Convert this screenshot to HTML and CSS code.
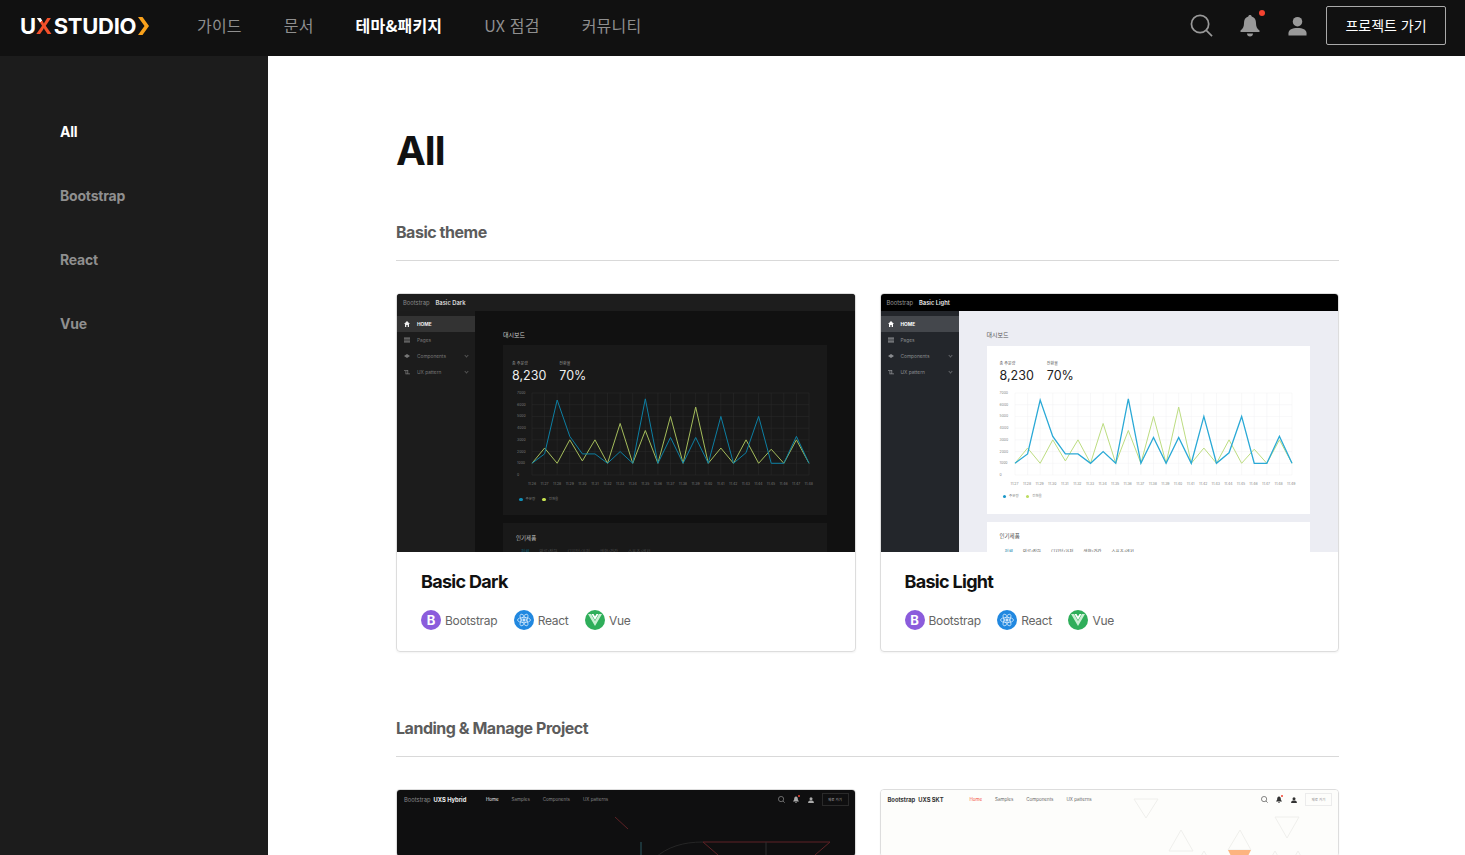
FILE: index.html
```html
<!DOCTYPE html>
<html lang="ko">
<head>
  <meta charset="UTF-8">
  <meta name="viewport" content="width=device-width, initial-scale=1.0">
  <title>UX STUDIO - All</title>
  <link rel="stylesheet" href="styles.css">
</head>
<body>
  <header class="topbar">
    <a class="logo" href="#">
      <span>U<span class="logo-x">X</span></span><span class="logo-studio">STUDIO</span>
      <svg class="logo-arrow" width="11" height="18" viewBox="0 0 11 18"><path d="M0 0h4.500L11 9l-6.500 9H0l6.500-9z"/></svg>
    </a>
    <nav class="topnav">
      <a href="#">가이드</a>
      <a href="#">문서</a>
      <a href="#" class="active">테마&amp;패키지</a>
      <a href="#">UX 점검</a>
      <a href="#">커뮤니티</a>
    </nav>
    <div class="top-actions">
      <svg class="top-icon" width="23" height="23" viewBox="0 0 24 24"><circle cx="10.500" cy="10.500" r="9" fill="none" stroke="#999" stroke-width="1.800"/><path d="M17 17l6 6" stroke="#999" stroke-width="1.800" fill="none"/></svg>
      <span class="bell">
        <svg width="20" height="23" viewBox="0 0 20 23"><path fill="#999" d="M10 1c1 0 1.700.7 1.700 1.600 3 .8 4.300 3.300 4.300 6.400 0 3.500.8 5.300 3.500 7.500v1.500H.5v-1.500C3.200 14.300 4 12.500 4 9c0-3.100 1.300-5.600 4.300-6.400C8.300 1.700 9 1 10 1zM7 19.500h6c0 1.700-1.300 3-3 3s-3-1.300-3-3z"/></svg>
        <i class="bell-dot"></i>
      </span>
      <svg class="top-icon" width="19" height="20" viewBox="0 0 20 20"><circle cx="10" cy="5.500" r="5" fill="#999"/><path fill="#999" d="M.5 20v-2.500c0-3.700 4-5.500 9.500-5.500s9.500 1.800 9.500 5.500V20z"/></svg>
      <a href="#" class="project-btn">프로젝트 가기</a>
    </div>
  </header>

  <div class="page">
    <aside class="sidebar">
      <a href="#" class="active">All</a>
      <a href="#">Bootstrap</a>
      <a href="#">React</a>
      <a href="#">Vue</a>
    </aside>

    <main class="content">
      <h1>All</h1>

      <h2 class="section-title">Basic theme</h2>
      <div class="card-grid">
        <article class="card">
          <div class="thumb thumb-dark">
            <div class="t-head"><span>Bootstrap</span><b>Basic Dark</b></div>
            <div class="t-body">
              <div class="t-side">
                <div class="t-row on"><svg width="6" height="6" viewBox="0 0 6 6"><path d="M3 0l3 3H5v3H3.700V4H2.300v2H1V3H0z"/></svg>HOME</div>
                <div class="t-row"><svg width="6" height="6" viewBox="0 0 6 6"><path d="M0 .5h6v1.200H0zM0 2.400h6v1.200H0zM0 4.300h6v1.200H0z"/></svg>Pages</div>
                <div class="t-row"><svg width="6" height="6" viewBox="0 0 6 6"><path d="M3 1l3 2-3 2-3-2z"/></svg>Components<i class="t-caret"></i></div>
                <div class="t-row"><svg width="6" height="6" viewBox="0 0 6 6"><path d="M0 1h4v.8H0zM3.400 1h.8v4h-.8zM1.500 4.400H6v.8H1.500zM1.500 2h.8v3h-.8z"/></svg>UX pattern<i class="t-caret"></i></div>
              </div>
              <div class="t-main">
                <div class="t-title">대시보드</div>
                <div class="t-panel">
                  <div class="t-stats">
                    <div><small>총 주문량</small><strong>8,230</strong></div>
                    <div><small>전환율</small><strong>70%</strong></div>
                  </div>
                  <div class="t-chart">
                    <div class="t-yaxis"><span>7000</span><span>6000</span><span>5000</span><span>4000</span><span>3000</span><span>2000</span><span>1000</span><span>0</span></div>
                    <svg class="t-plot" viewBox="0 0 22 7000" preserveAspectRatio="none">
                      <path class="grid" d="M0 0H22M0 1000H22M0 2000H22M0 3000H22M0 4000H22M0 5000H22M0 6000H22M0 7000H22M0 0V7000M1 0V7000M2 0V7000M3 0V7000M4 0V7000M5 0V7000M6 0V7000M7 0V7000M8 0V7000M9 0V7000M10 0V7000M11 0V7000M12 0V7000M13 0V7000M14 0V7000M15 0V7000M16 0V7000M17 0V7000M18 0V7000M19 0V7000M20 0V7000M21 0V7000M22 0V7000"/>
                      <polyline class="line-b" points="0,6000 1,4700 2,6000 3,4000 4,5800 5,4000 6,6000 7,2600 8,6000 9,3200 10,6000 11,2000 12,6000 13,1200 14,6000 15,4700 16,6000 17,4000 18,6000 19,4800 20,6000 21,4000 22,6000"/>
                      <polyline class="line-a" points="0,6000 1,5200 2,600 3,3700 4,5200 5,5200 6,6000 7,5000 8,6000 9,500 10,6000 11,3800 12,6000 13,3800 14,6000 15,2000 16,6000 17,5100 18,2000 19,6000 20,6000 21,3700 22,6000"/>
                    </svg>
                  </div>
                  <div class="t-xaxis"><span>11:26</span><span>11:27</span><span>11:28</span><span>11:29</span><span>11:30</span><span>11:31</span><span>11:32</span><span>11:33</span><span>11:34</span><span>11:35</span><span>11:36</span><span>11:37</span><span>11:38</span><span>11:39</span><span>11:40</span><span>11:41</span><span>11:42</span><span>11:43</span><span>11:44</span><span>11:45</span><span>11:46</span><span>11:47</span><span>11:48</span></div>
                  <div class="t-legend"><span><i class="dot-a"></i>주문량</span><span><i class="dot-b"></i>전환율</span></div>
                </div>
                <div class="t-panel t-panel-next">
                  <div class="t-sub">인기제품</div>
                  <div class="t-tabs"><span class="on">전체</span><span>의류/잡화</span><span>디지털/가전</span><span>생활/건강</span><span>스포츠/레저</span></div>
                </div>
              </div>
            </div>
          </div>
          <div class="card-body">
            <h3>Basic Dark</h3>
            <div class="badges">
              <span class="badge"><i class="badge-icon bs">B</i>Bootstrap</span>
              <span class="badge"><i class="badge-icon re"><svg width="16" height="16" viewBox="0 0 16 16" fill="none" stroke="#cfe6fb" stroke-width=".8"><ellipse cx="8" cy="8" rx="6.500" ry="2.600"/><ellipse cx="8" cy="8" rx="6.500" ry="2.600" transform="rotate(60 8 8)"/><ellipse cx="8" cy="8" rx="6.500" ry="2.600" transform="rotate(120 8 8)"/><circle cx="8" cy="8" r="1.200" fill="#cfe6fb"/></svg></i>React</span>
              <span class="badge"><i class="badge-icon vu"><svg width="14" height="12" viewBox="0 0 14 12"><path fill="#c9efd3" d="M0 0h3l4 7 4-7h3L7 12z"/><path fill="#fff" d="M3.500 0h2L7 2.600 8.500 0h2L7 6z"/></svg></i>Vue</span>
            </div>
          </div>
        </article>

        <article class="card">
          <div class="thumb thumb-light">
            <div class="t-head"><span>Bootstrap</span><b>Basic Light</b></div>
            <div class="t-body">
              <div class="t-side">
                <div class="t-row on"><svg width="6" height="6" viewBox="0 0 6 6"><path d="M3 0l3 3H5v3H3.700V4H2.300v2H1V3H0z"/></svg>HOME</div>
                <div class="t-row"><svg width="6" height="6" viewBox="0 0 6 6"><path d="M0 .5h6v1.200H0zM0 2.400h6v1.200H0zM0 4.300h6v1.200H0z"/></svg>Pages</div>
                <div class="t-row"><svg width="6" height="6" viewBox="0 0 6 6"><path d="M3 1l3 2-3 2-3-2z"/></svg>Components<i class="t-caret"></i></div>
                <div class="t-row"><svg width="6" height="6" viewBox="0 0 6 6"><path d="M0 1h4v.8H0zM3.400 1h.8v4h-.8zM1.500 4.400H6v.8H1.500zM1.500 2h.8v3h-.8z"/></svg>UX pattern<i class="t-caret"></i></div>
              </div>
              <div class="t-main">
                <div class="t-title">대시보드</div>
                <div class="t-panel">
                  <div class="t-stats">
                    <div><small>총 주문량</small><strong>8,230</strong></div>
                    <div><small>전환율</small><strong>70%</strong></div>
                  </div>
                  <div class="t-chart">
                    <div class="t-yaxis"><span>7000</span><span>6000</span><span>5000</span><span>4000</span><span>3000</span><span>2000</span><span>1000</span><span>0</span></div>
                    <svg class="t-plot" viewBox="0 0 22 7000" preserveAspectRatio="none">
                      <path class="grid" d="M0 0H22M0 1000H22M0 2000H22M0 3000H22M0 4000H22M0 5000H22M0 6000H22M0 7000H22M0 0V7000M1 0V7000M2 0V7000M3 0V7000M4 0V7000M5 0V7000M6 0V7000M7 0V7000M8 0V7000M9 0V7000M10 0V7000M11 0V7000M12 0V7000M13 0V7000M14 0V7000M15 0V7000M16 0V7000M17 0V7000M18 0V7000M19 0V7000M20 0V7000M21 0V7000M22 0V7000"/>
                      <polyline class="line-b" points="0,6000 1,4700 2,6000 3,4000 4,5800 5,4000 6,6000 7,2600 8,6000 9,3200 10,6000 11,2000 12,6000 13,1200 14,6000 15,4700 16,6000 17,4000 18,6000 19,4800 20,6000 21,4000 22,6000"/>
                      <polyline class="line-a" points="0,6000 1,5200 2,600 3,3700 4,5200 5,5200 6,6000 7,5000 8,6000 9,500 10,6000 11,3800 12,6000 13,3800 14,6000 15,2000 16,6000 17,5100 18,2000 19,6000 20,6000 21,3700 22,6000"/>
                    </svg>
                  </div>
                  <div class="t-xaxis"><span>11:27</span><span>11:28</span><span>11:29</span><span>11:30</span><span>11:31</span><span>11:32</span><span>11:33</span><span>11:34</span><span>11:35</span><span>11:36</span><span>11:37</span><span>11:38</span><span>11:39</span><span>11:40</span><span>11:41</span><span>11:42</span><span>11:43</span><span>11:44</span><span>11:45</span><span>11:46</span><span>11:47</span><span>11:48</span><span>11:49</span></div>
                  <div class="t-legend"><span><i class="dot-a"></i>주문량</span><span><i class="dot-b"></i>전환율</span></div>
                </div>
                <div class="t-panel t-panel-next">
                  <div class="t-sub">인기제품</div>
                  <div class="t-tabs"><span class="on">전체</span><span>의류/잡화</span><span>디지털/가전</span><span>생활/건강</span><span>스포츠/레저</span></div>
                </div>
              </div>
            </div>
          </div>
          <div class="card-body">
            <h3>Basic Light</h3>
            <div class="badges">
              <span class="badge"><i class="badge-icon bs">B</i>Bootstrap</span>
              <span class="badge"><i class="badge-icon re"><svg width="16" height="16" viewBox="0 0 16 16" fill="none" stroke="#cfe6fb" stroke-width=".8"><ellipse cx="8" cy="8" rx="6.500" ry="2.600"/><ellipse cx="8" cy="8" rx="6.500" ry="2.600" transform="rotate(60 8 8)"/><ellipse cx="8" cy="8" rx="6.500" ry="2.600" transform="rotate(120 8 8)"/><circle cx="8" cy="8" r="1.200" fill="#cfe6fb"/></svg></i>React</span>
              <span class="badge"><i class="badge-icon vu"><svg width="14" height="12" viewBox="0 0 14 12"><path fill="#c9efd3" d="M0 0h3l4 7 4-7h3L7 12z"/><path fill="#fff" d="M3.500 0h2L7 2.600 8.500 0h2L7 6z"/></svg></i>Vue</span>
            </div>
          </div>
        </article>
      </div>

      <h2 class="section-title section-next">Landing &amp; Manage Project</h2>
      <div class="card-grid">
        <article class="card">
          <div class="thumb thumb-site site-dark">
            <svg class="site-art" width="458" height="70" viewBox="0 0 458 70" fill="none">
              <path d="M218 27l13 12M306 52h127M306 52l15 13M433 52l-15 13" stroke="#5e2226"/>
              <path d="M369 52v16" stroke="#2e2e2e"/>
              <path d="M244 52v14" stroke="#2b5a63"/>
              <path d="M258 68c12-11 28-16 48-16" stroke="#262626"/>
            </svg>
            <div class="site-head">
              <span class="site-brand"><span>Bootstrap</span><b>UXS Hybrid</b></span>
              <span class="site-nav"><a class="on">Home</a><a>Samples</a><a>Components</a><a>UX patterns</a></span>
              <span class="site-tools">
                <svg width="7" height="7" viewBox="0 0 24 24"><circle cx="10.500" cy="10.500" r="9" fill="none" stroke="currentColor" stroke-width="2"/><path d="M17 17l6 6" stroke="currentColor" stroke-width="2"/></svg>
                <span class="mini-bell"><svg width="6" height="7" viewBox="0 0 20 23"><path fill="currentColor" d="M10 1c1 0 1.700.7 1.700 1.600 3 .8 4.300 3.300 4.300 6.400 0 3.500.8 5.300 3.500 7.500v1.500H.5v-1.500C3.200 14.300 4 12.500 4 9c0-3.100 1.300-5.600 4.300-6.400C8.300 1.700 9 1 10 1zM7 19.500h6c0 1.700-1.300 3-3 3s-3-1.300-3-3z"/></svg></span>
                <svg class="mini-user" width="6" height="6" viewBox="0 0 20 20"><circle cx="10" cy="5.500" r="5" fill="currentColor"/><path fill="currentColor" d="M.5 20v-2.500c0-3.700 4-5.500 9.500-5.500s9.500 1.800 9.500 5.500V20z"/></svg>
                <span class="site-btn">제로 가기</span>
              </span>
            </div>
          </div>
        </article>

        <article class="card">
          <div class="thumb thumb-site site-light">
            <svg class="site-art" width="458" height="70" viewBox="0 0 458 70" fill="none" stroke="#efefec">
              <path d="M253 9h24l-12 19zM394 27h24l-12 21zM300 40l-12 21h24zM359 40l-12 20h23zM323 61l-8 14h16zM394 61l-8 14h16zM417 61l-8 14h16z"/>
              <path d="M347 60h23l-5 10h-13z" fill="#fdb480" stroke="none"/>
            </svg>
            <div class="site-head">
              <span class="site-brand"><b>Bootstrap</b><b>UXS SKT</b></span>
              <span class="site-nav"><a class="on">Home</a><a>Samples</a><a>Components</a><a>UX patterns</a></span>
              <span class="site-tools">
                <svg width="7" height="7" viewBox="0 0 24 24"><circle cx="10.500" cy="10.500" r="9" fill="none" stroke="currentColor" stroke-width="2"/><path d="M17 17l6 6" stroke="currentColor" stroke-width="2"/></svg>
                <span class="mini-bell"><svg width="6" height="7" viewBox="0 0 20 23"><path fill="currentColor" d="M10 1c1 0 1.700.7 1.700 1.600 3 .8 4.300 3.300 4.300 6.400 0 3.500.8 5.300 3.500 7.500v1.500H.5v-1.500C3.200 14.300 4 12.500 4 9c0-3.100 1.300-5.600 4.300-6.400C8.300 1.700 9 1 10 1zM7 19.500h6c0 1.700-1.300 3-3 3s-3-1.300-3-3z"/></svg></span>
                <svg class="mini-user" width="6" height="6" viewBox="0 0 20 20"><circle cx="10" cy="5.500" r="5" fill="currentColor"/><path fill="currentColor" d="M.5 20v-2.500c0-3.700 4-5.500 9.500-5.500s9.500 1.800 9.500 5.500V20z"/></svg>
                <span class="site-btn">제로 가기</span>
              </span>
            </div>
          </div>
        </article>
      </div>
    </main>
  </div>
</body>
</html>
```

FILE: styles.css
```css
* {
  box-sizing: border-box;
}

html, body {
  height: 100%;
}

body {
  margin: 0;
  overflow: hidden;
  background: #fff;
  color: #111;
  font-family: Inter, "Noto Sans CJK KR", sans-serif;
}

a {
  color: inherit;
  text-decoration: none;
}

/* top bar */
.topbar {
  display: flex;
  align-items: center;
  height: 56px;
  padding: 0 19px 5px 20px;
  background: #111;
}

.logo {
  display: flex;
  align-items: center;
  width: 177px;
  color: #fff;
  font-size: 22px;
  font-weight: 700;
  letter-spacing: -.3px;
}

/* one stroke of the X stays white, the rest is red */
.logo-x {
  background: linear-gradient(to bottom right, #fff 32%, #f4502a 32%);
  -webkit-background-clip: text;
  background-clip: text;
  color: transparent;
}

.logo-studio {
  margin-left: 2px;
}

.logo-arrow {
  margin-left: 2px;
  fill: #f9a11b;
}

.topnav {
  display: flex;
  gap: 42px;
  margin-bottom: 2px;
  font-family: "Noto Sans CJK KR", sans-serif;
  font-size: 16px;
  letter-spacing: .2px;
  color: #8f8f8f;
}

.topnav .active {
  color: #fff;
  font-weight: 700;
}

.top-actions {
  display: flex;
  align-items: center;
  margin-left: auto;
}

.top-icon {
  display: block;
}

.bell {
  position: relative;
  display: block;
  height: 23px;
  margin: 0 28px 0 27px;
}

.bell-dot {
  position: absolute;
  top: -4px;
  right: -5px;
  width: 6px;
  height: 6px;
  border-radius: 50%;
  background: #f44330;
}

.project-btn {
  display: flex;
  align-items: center;
  justify-content: center;
  width: 120px;
  height: 39px;
  margin-left: 19px;
  padding-bottom: 2px;
  border: 1px solid #aaa;
  border-radius: 2px;
  color: #fff;
  font-family: "Noto Sans CJK KR", sans-serif;
  font-size: 14px;
}

/* sidebar */
.page {
  display: flex;
  height: calc(100% - 56px);
}

.sidebar {
  display: flex;
  flex-direction: column;
  flex: 0 0 268px;
  padding: 44px 0 0 60px;
  background: #1c1c1c;
  color: #8f8f8f;
  font-size: 14px;
  font-weight: 700;
  letter-spacing: -.2px;
}

.sidebar a {
  height: 64px;
  line-height: 64px;
}

.sidebar .active {
  color: #fff;
}

/* content */
.content {
  flex: 1;
  min-width: 0;
  padding: 72px 126px 0 128px;
}

h1 {
  margin: 0;
  font-size: 40px;
  line-height: 46px;
  font-weight: 700;
  letter-spacing: -1px;
}

.section-title {
  height: 43px;
  margin: 44px 0 0;
  border-bottom: 1px solid #d9d9d9;
  color: #5c5c5c;
  font-size: 16px;
  line-height: 28px;
  font-weight: 700;
  letter-spacing: -.47px;
}

.section-next {
  margin-top: 62px;
}

.card-grid {
  display: grid;
  grid-template-columns: 1fr 1fr;
  gap: 24px;
  margin-top: 32px;
}

.card {
  overflow: hidden;
  border: 1px solid #ddd;
  border-radius: 4px;
  box-shadow: 0 1px 2px rgba(0,0,0,.05);
}

.card-body {
  height: 99px;
  padding: 18px 24px 0;
}

.card-body h3 {
  margin: 0 0 16px;
  font-size: 18px;
  line-height: 24px;
  font-weight: 700;
  letter-spacing: -.7px;
}

.badges {
  display: flex;
  gap: 16.500px;
}

.badge {
  display: flex;
  align-items: center;
  gap: 4px;
  color: #666;
  font-size: 12px;
  letter-spacing: -.3px;
}

.badge-icon {
  display: flex;
  align-items: center;
  justify-content: center;
  width: 20px;
  height: 20px;
  border-radius: 50%;
  color: #fff;
  font-style: normal;
  font-size: 13px;
  font-weight: 700;
}

.bs {
  background: #8b5cdc;
}

.re {
  background: #2188e0;
}

.vu {
  background: #2fae5a;
}

/* mini dashboards inside the cards */
.thumb {
  position: relative;
  height: 258px;
  overflow: hidden;
  font-size: 5px;
}

.t-head {
  display: flex;
  align-items: center;
  gap: 6px;
  height: 17px;
  padding-left: 6px;
  font-size: 5.800px;
}

.t-head b {
  font-weight: 600;
}

.t-body {
  display: flex;
  height: 241px;
}

.t-side {
  flex: 0 0 78px;
  padding-top: 5px;
  font-size: 4.800px;
}

.t-row {
  display: flex;
  align-items: center;
  gap: 7px;
  height: 16px;
  padding: 0 7px;
}

.t-row svg {
  fill: currentColor;
}

.t-row.on {
  font-weight: 700;
}

.t-caret {
  width: 3px;
  height: 3px;
  margin: -2px 0 0 auto;
  border-right: .6px solid currentColor;
  border-bottom: .6px solid currentColor;
  opacity: .6;
  transform: rotate(45deg);
}

.t-main {
  flex: 1;
  min-width: 0;
  padding: 20px 28px 0;
}

.t-title {
  height: 14px;
  font-size: 6px;
  line-height: 8px;
}

.t-panel {
  height: 170px;
  padding: 16px 14px 0 9px;
}

.t-panel-next {
  margin-top: 8px;
  padding: 11px 0 0 13px;
}

.t-stats {
  display: flex;
  gap: 13px;
}

.t-stats small {
  display: block;
  margin-bottom: 1px;
  font-size: 4px;
  line-height: 6px;
}

.t-stats strong {
  display: block;
  font-size: 12.500px;
  line-height: 16px;
  font-weight: 400;
}

.t-chart {
  display: flex;
  margin-top: 9px;
}

.t-yaxis {
  display: flex;
  flex-direction: column;
  justify-content: space-between;
  width: 20px;
  height: 86px;
  margin: -2px 0;
  padding-left: 5px;
  font-size: 3.500px;
  line-height: 4px;
}

.t-plot {
  width: 277px;
  height: 82px;
  overflow: visible;
}

.t-plot .grid,
.t-plot polyline {
  fill: none;
  vector-effect: non-scaling-stroke;
}

.t-plot .grid {
  stroke-width: .5;
}

.t-plot polyline {
  stroke-width: 1;
}

.t-xaxis {
  display: flex;
  justify-content: space-between;
  width: 289px;
  margin: 6px 0 0 14px;
  font-size: 3.500px;
  line-height: 6px;
}

.t-xaxis span {
  width: 12px;
  text-align: center;
}

.t-legend {
  display: flex;
  gap: 7px;
  margin: 10px 0 0 7px;
  font-size: 3.500px;
  line-height: 5px;
}

.t-legend span {
  display: flex;
  align-items: center;
  gap: 3px;
}

.t-legend i {
  width: 3.500px;
  height: 3.500px;
  border-radius: 50%;
}

.t-sub {
  font-size: 5.500px;
  line-height: 8px;
}

.t-tabs {
  display: flex;
  gap: 10px;
  margin: 6px 0 0 5px;
  font-size: 4.500px;
}

/* dark theme of the mini dashboard */
.thumb-dark {
  background: #111;
  color: #bbb;
}

.thumb-dark .t-head {
  background: #1d1d1d;
}

.thumb-dark .t-head span {
  color: #888;
}

.thumb-dark .t-head b {
  color: #ddd;
}

.thumb-dark .t-side {
  background: #1c1c1c;
  color: #777;
}

.thumb-dark .t-row.on {
  background: #333;
  color: #eee;
}

.thumb-dark .t-title {
  color: #ccc;
}

.thumb-dark .t-panel {
  background: #191919;
}

.thumb-dark .t-stats small {
  color: #999;
}

.thumb-dark .t-stats strong {
  color: #eee;
}

.thumb-dark .t-yaxis,
.thumb-dark .t-xaxis,
.thumb-dark .t-legend {
  color: #777;
}

.thumb-dark .grid {
  stroke: #2c2c2c;
}

.thumb-dark .line-a {
  stroke: #0d7fa3;
}

.thumb-dark .line-b {
  stroke: #a5bd5c;
}

.thumb-dark .dot-a {
  background: #0f8db5;
}

.thumb-dark .dot-b {
  background: #c4e04f;
}

.thumb-dark .t-tabs {
  color: #4a4a4a;
}

.thumb-dark .t-tabs .on {
  color: #0b5f7a;
}

/* light theme of the mini dashboard */
.thumb-light {
  background: #ecedf3;
  color: #555;
}

.thumb-light .t-head {
  background: #000;
}

.thumb-light .t-head span {
  color: #999;
}

.thumb-light .t-head b {
  color: #eee;
}

.thumb-light .t-side {
  background: #23262b;
  color: #8a8c90;
}

.thumb-light .t-row.on {
  background: #44474c;
  color: #fff;
}

.thumb-light .t-main {
  padding-top: 21px;
}

.thumb-light .t-title {
  height: 14px;
  margin-top: -1px;
  margin-bottom: 1px;
  color: #555;
}

.thumb-light .t-panel {
  height: 168px;
  padding: 15px 13px 0;
  background: #fff;
}

.thumb-light .t-panel-next {
  height: 170px;
  padding: 10px 0 0 13px;
}

.thumb-light .t-tabs {
  margin-top: 8px;
}

.thumb-light .t-stats strong {
  color: #222;
}

.thumb-light .t-yaxis {
  width: 15px;
  padding-left: 0;
}

.thumb-light .t-xaxis {
  margin-left: 9px;
}

.thumb-light .t-legend {
  margin: 7px 0 0 3px;
}

.thumb-light .t-yaxis,
.thumb-light .t-xaxis,
.thumb-light .t-legend {
  color: #888;
}

.thumb-light .grid {
  stroke: #f0f0f2;
}

.thumb-light .line-a {
  stroke: #2aa9d6;
  stroke-width: 1.300;
}

.thumb-light .line-b {
  stroke: #bcdc80;
}

.thumb-light .dot-a {
  background: #1896c8;
}

.thumb-light .dot-b {
  background: #bcdc60;
}

.thumb-light .t-tabs .on {
  color: #1480a8;
}

/* mini landing pages */
.thumb-site {
  height: 66px;
}

.site-art {
  position: absolute;
  top: 0;
  left: 0;
}

.site-head {
  position: relative;
  display: flex;
  align-items: center;
  height: 19px;
  padding: 0 6px 0 7px;
  font-size: 4.500px;
}

.site-brand {
  display: flex;
  gap: 3px;
  width: 82px;
  font-size: 5.800px;
}

.site-nav {
  display: flex;
  gap: 13px;
}

.site-tools {
  display: flex;
  align-items: center;
  margin-left: auto;
}

.mini-bell {
  position: relative;
  display: flex;
  margin-left: 8px;
}

.mini-bell::after {
  content: "";
  position: absolute;
  top: -1px;
  right: -1px;
  width: 2px;
  height: 2px;
  border-radius: 50%;
  background: #f44330;
}

.mini-user {
  margin-left: 9px;
}

.site-btn {
  display: flex;
  align-items: center;
  justify-content: center;
  width: 27px;
  height: 13px;
  margin-left: 8px;
  border: 1px solid;
  font-size: 3.500px;
}

.site-dark {
  background: #0f0f10;
  color: #888;
}

.site-dark .site-brand b,
.site-dark .site-nav .on {
  color: #eee;
}

.site-dark .site-tools {
  color: #aaa;
}

.site-dark .site-btn {
  border-color: #2a2a2a;
}

.site-light {
  background: #fdfdfb;
  color: #666;
}

.site-light .site-brand b {
  color: #333;
}

.site-light .site-nav .on {
  color: #f4503a;
}

.site-light .site-tools {
  color: #333;
}

.site-light .site-btn {
  border-color: #ececec;
  color: #888;
}
```
